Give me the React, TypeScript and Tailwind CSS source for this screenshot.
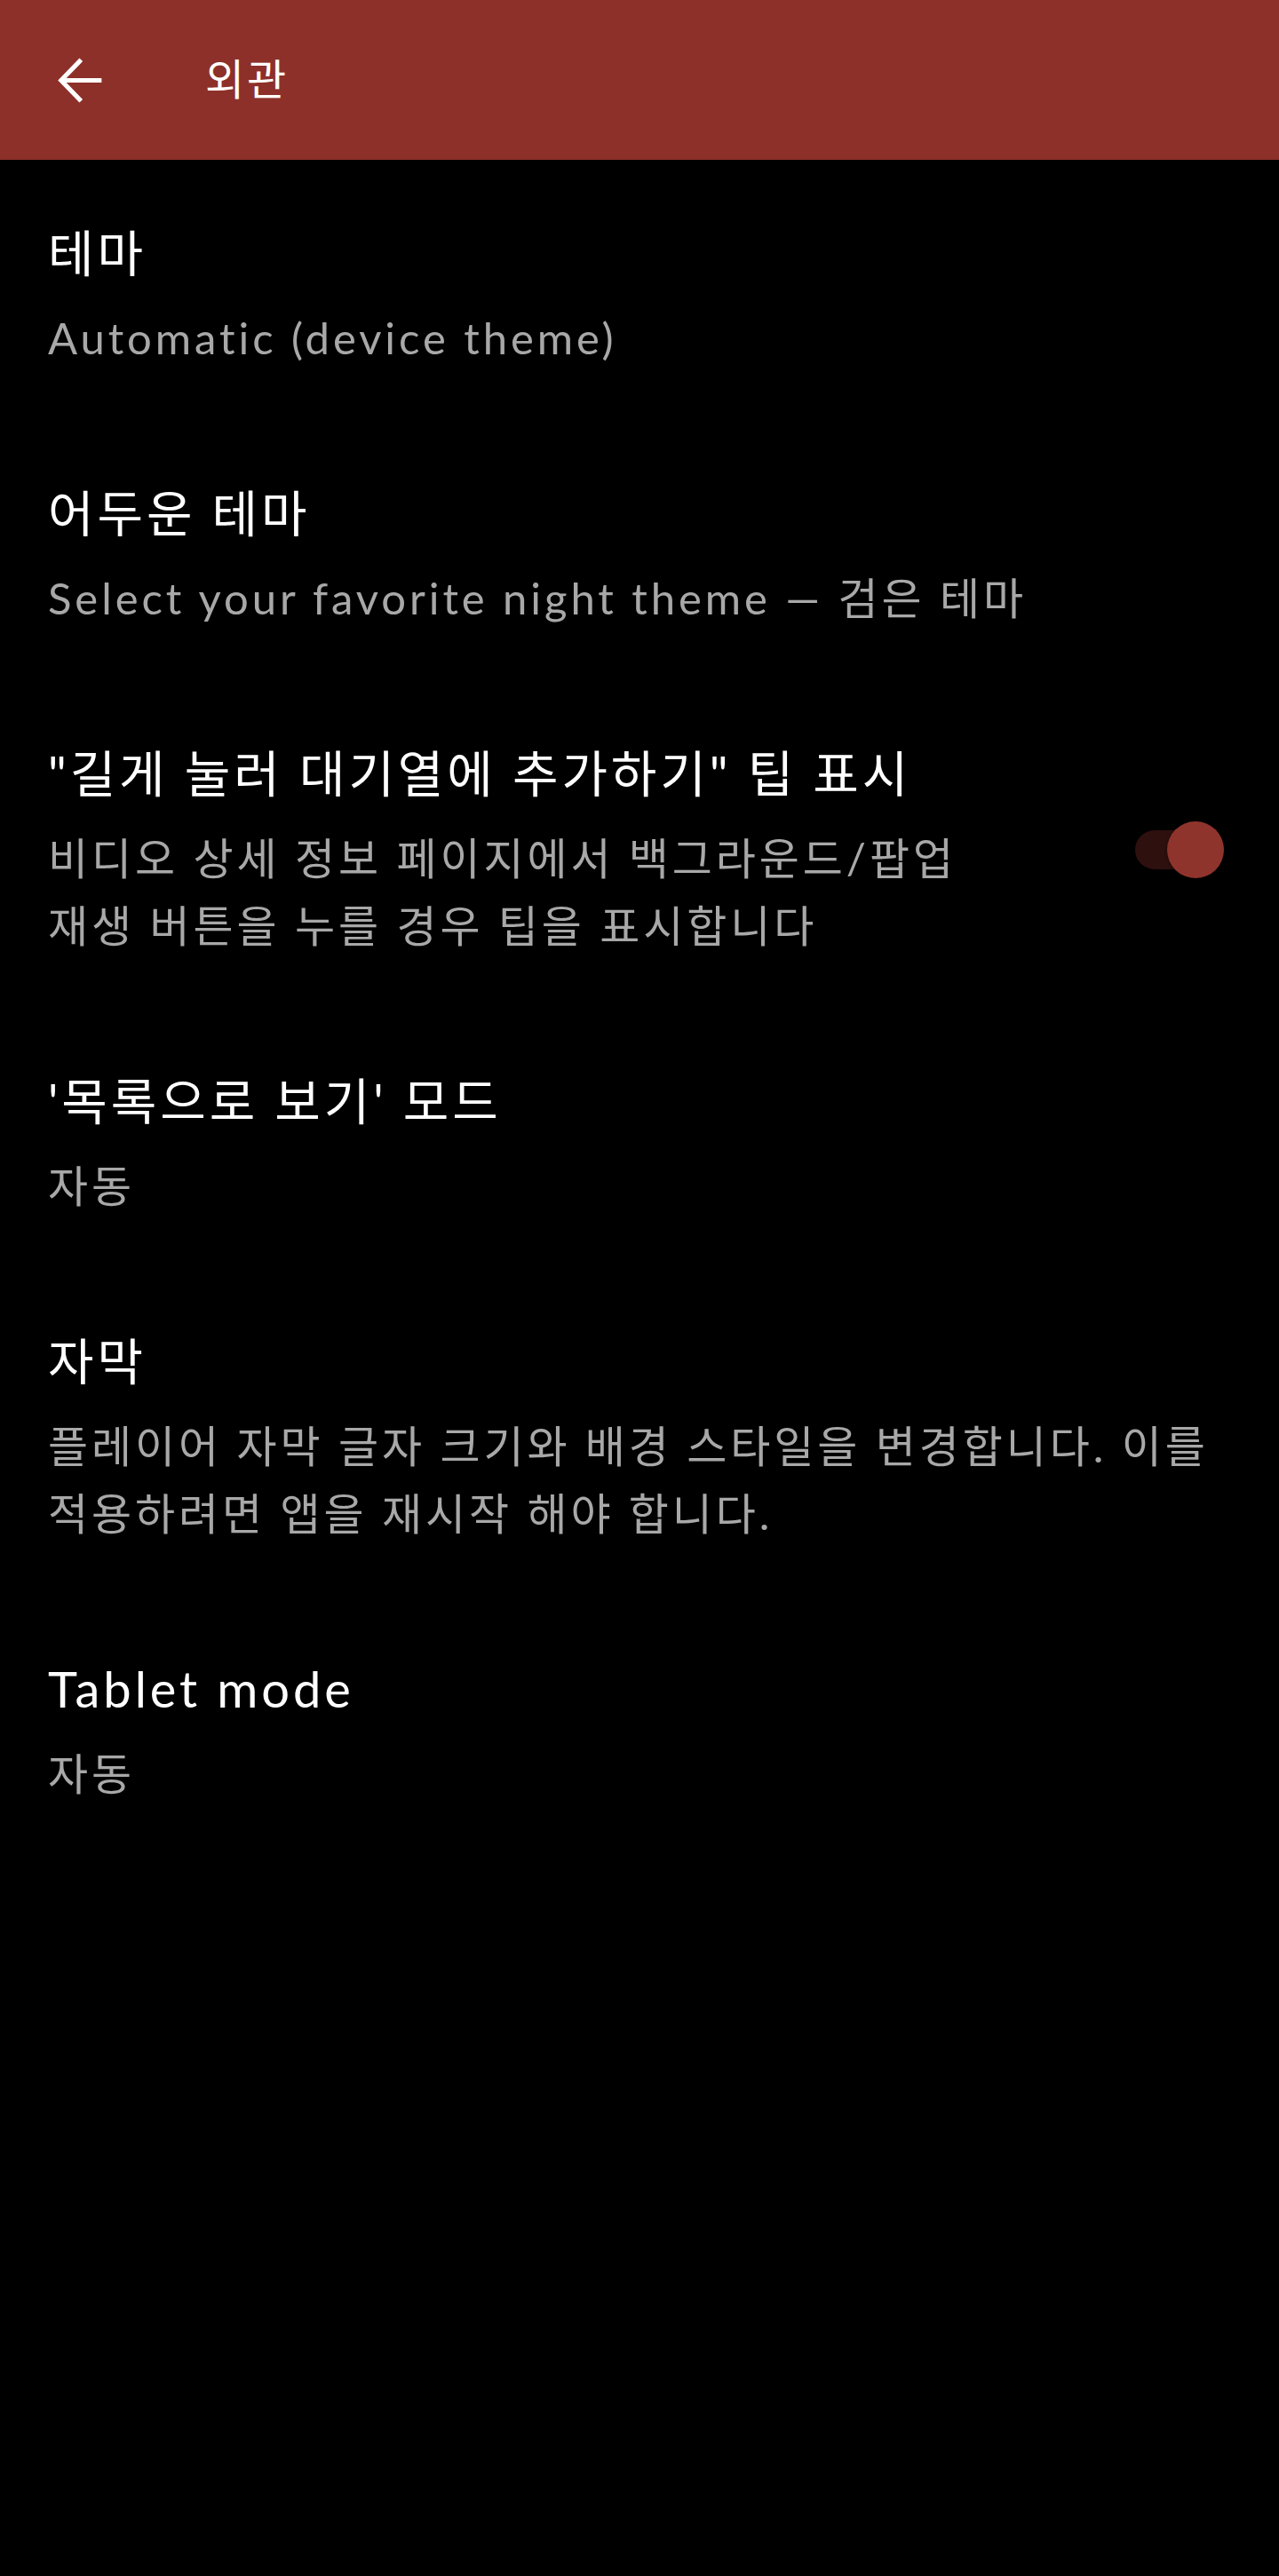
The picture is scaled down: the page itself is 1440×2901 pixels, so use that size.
import React, { useState } from 'react';

type Pref = {
  title: string;
  summary: string;
  toggle?: boolean;
};

const PREFS: Pref[] = [
  { title: '테마', summary: 'Automatic (device theme)' },
  { title: '어두운 테마', summary: 'Select your favorite night theme — 검은 테마' },
  {
    title: '"길게 눌러 대기열에 추가하기" 팁 표시',
    summary: '비디오 상세 정보 페이지에서 백그라운드/팝업 재생 버튼을 누를 경우 팁을 표시합니다',
    toggle: true,
  },
  { title: "'목록으로 보기' 모드", summary: '자동' },
  { title: '자막', summary: '플레이어 자막 글자 크기와 배경 스타일을 변경합니다. 이를 적용하려면 앱을 재시작 해야 합니다.' },
  { title: 'Tablet mode', summary: '자동' },
];

const Toggle: React.FC<{ on: boolean; onChange: () => void }> = ({ on, onChange }) => (
  <button onClick={onChange} className="relative w-[100px] h-[64px] shrink-0 flex items-center">
    <span className="absolute left-0 right-[8px] h-[44px] rounded-full bg-[#2e100e]" />
    <span
      className={`absolute w-[64px] h-[64px] rounded-full bg-[#8f342c] shadow-[0_1px_3px_rgba(0,0,0,0.5)] ${
        on ? 'left-[36px]' : 'left-0'
      }`}
    />
  </button>
);

export default function App() {
  const [tipOn, setTipOn] = useState(true);

  return (
    <div className="min-h-[2901px] bg-black text-white font-['Lato','Noto_Sans_CJK_KR',sans-serif]">
      {/* Toolbar */}
      <div className="h-[180px] bg-[#8d3029] flex items-center">
        <button className="w-[178px] h-[180px] flex items-center pl-[64px]">
          <svg width="51" height="51" viewBox="0 0 16 16" fill="none">
            <path d="M15 8H2M8 1.3L1.5 8L8 14.7" stroke="white" strokeWidth="1.6" strokeLinecap="square" />
          </svg>
        </button>
        <h1 className="text-[48px] leading-none tracking-[0.06em] ml-[53px] -mt-[2px]">외관</h1>
      </div>

      {/* Preference list */}
      <div>
        {PREFS.map(p => (
          <div key={p.title} className="flex items-center pl-[54px] pr-[62px] pt-[67px] pb-[55px]">
            <div className="flex-1 min-w-0 break-keep">
              <div className="text-[56px] leading-[76px] tracking-[0.07em] text-white">{p.title}</div>
              <div
                className={`mt-[19px] text-[49px] leading-[76px] tracking-[0.08em] text-[#a8a8a8] ${
                  p.toggle ? 'pr-[140px]' : ''
                }`}
              >
                {p.summary}
              </div>
            </div>
            {p.toggle && <Toggle on={tipOn} onChange={() => setTipOn(v => !v)} />}
          </div>
        ))}
      </div>
    </div>
  );
}
